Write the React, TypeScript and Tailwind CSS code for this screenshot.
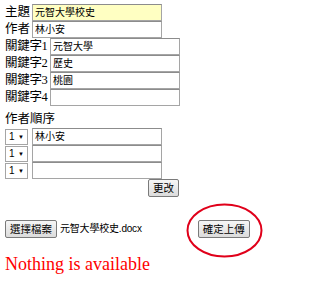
const labelFont = { fontFamily: '"Liberation Serif", "Noto Sans CJK TC", serif' };

function TextBox({ value, yellow }: { value: string; yellow?: boolean }) {
  return (
    <div
      className={`w-[130px] shrink-0 h-[17px] border border-[#a5a5a5] border-t-[#8c8c8c] pl-[2px] flex items-center text-[10px] text-black leading-none whitespace-nowrap ${yellow ? 'bg-[#ffffc2]' : 'bg-white'}`}
      style={{ fontFamily: '"Liberation Sans", "Noto Sans CJK TC", sans-serif' }}
    >
      {value}
    </div>
  );
}

function Btn({ children }: { children: string }) {
  return (
    <div
      className="h-[18px] px-[4px] shrink-0 flex items-center border border-[#7a7a7a] rounded-[2px] bg-gradient-to-b from-[#f6f6f6] to-[#dcdcdc] text-[10.5px] text-black leading-none whitespace-nowrap"
      style={{ fontFamily: '"Liberation Sans", "Noto Sans CJK TC", sans-serif' }}
    >
      {children}
    </div>
  );
}

function OrderSelect() {
  return (
    <div
      className="w-[23px] shrink-0 h-[16px] border border-[#a5a5a5] bg-white flex items-center justify-between pl-[3px] pr-[3px] text-[10px] text-black leading-none"
      style={{ fontFamily: '"Liberation Sans", sans-serif' }}
    >
      <span>1</span>
      <span className="text-[6px]">▼</span>
    </div>
  );
}

export default function App() {
  const keywords = ['元智大學', '歷史', '桃園', ''];
  const authors = ['林小安', '', ''];

  return (
    <div className="w-[309px] h-[286px] bg-white pl-[5px] pt-[4px] text-black text-[12.5px]" style={labelFont}>
      <div className="flex items-center h-[17px]">
        <span className="w-[27px] shrink-0 whitespace-nowrap leading-none">主題</span>
        <TextBox value="元智大學校史" yellow />
      </div>
      <div className="flex items-center h-[17px]">
        <span className="w-[27px] shrink-0 whitespace-nowrap leading-none">作者</span>
        <TextBox value="林小安" />
      </div>
      {keywords.map((k, i) => (
        <div key={i} className="flex items-center h-[17px]">
          <span className="w-[45px] shrink-0 whitespace-nowrap leading-none tracking-[-0.3px]">關鍵字{i + 1}</span>
          <TextBox value={k} />
        </div>
      ))}

      <div className="mt-[5px] h-[17px] flex items-center leading-none whitespace-nowrap">作者順序</div>
      {authors.map((a, i) => (
        <div key={i} className="flex items-center h-[17px] gap-[4px]">
          <OrderSelect />
          <TextBox value={a} />
        </div>
      ))}
      <div className="flex pl-[143px]">
        <Btn>更改</Btn>
      </div>

      <div className="flex items-center mt-[23px]">
        <Btn>選擇檔案</Btn>
        <span
          className="ml-[3px] text-[10px] leading-none whitespace-nowrap tracking-[-0.2px]"
          style={{ fontFamily: '"Liberation Sans", "Noto Sans CJK TC", sans-serif' }}
        >
          元智大學校史.docx
        </span>
        <div className="relative ml-[56px]">
          <Btn>確定上傳</Btn>
          <svg className="absolute left-[-12px] top-[-17px]" width="77" height="55" viewBox="0 0 77 55">
            <ellipse cx="38.5" cy="27.5" rx="37" ry="26" fill="none" stroke="#e0001a" strokeWidth="2" />
          </svg>
        </div>
      </div>

      <div className="mt-[17px] text-[18px] text-[#ff0000] leading-none whitespace-nowrap" style={{ fontFamily: '"Liberation Serif", serif' }}>
        Nothing is available
      </div>
    </div>
  );
}
